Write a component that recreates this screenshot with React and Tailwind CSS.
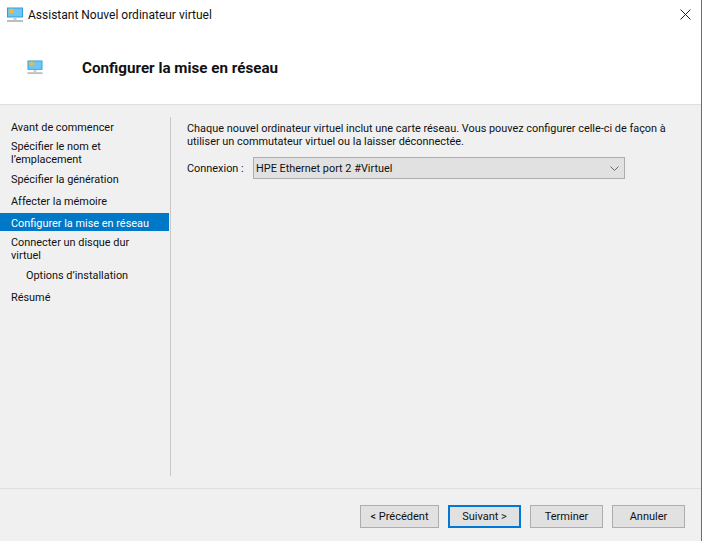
const steps = [
  { label: 'Avant de commencer', cls: 'h-[19px] pt-[3px]' },
  { label: "Spécifier le nom et l’emplacement", cls: 'h-[33px] pt-[3px]' },
  { label: 'Spécifier la génération', cls: 'h-[22px] pt-[3px]' },
  { label: 'Affecter la mémoire', cls: 'h-[21px] pt-[3px]' },
  { label: 'Configurer la mise en réseau', cls: 'h-[18px] pt-[4px] bg-[#0078c8] text-white' },
  { label: 'Connecter un disque dur virtuel', cls: 'h-[35px] pt-[5px]' },
  { label: 'Options d’installation', cls: 'h-[22px] pt-[3px] pl-[26px]' },
  { label: 'Résumé', cls: 'h-[22px] pt-[3px]' },
];

const MonitorIcon = ({ className }) => (
  <svg className={className} viewBox="0 0 16 16">
    <rect x="0" y="0.5" width="16" height="10" fill="#2f9fe0" />
    <rect x="1" y="1.5" width="14" height="8" fill="#6fc6f2" />
    <circle cx="4.5" cy="4" r="2.2" fill="#f6b73c" />
    <path d="M4.5 0.8V7.2M1.3 4H7.7M2.3 1.8L6.7 6.2M6.7 1.8L2.3 6.2" stroke="#f6b73c" strokeWidth="0.6" />
    <rect x="6.5" y="10.5" width="3" height="2.5" fill="#c5ccd2" />
    <rect x="0" y="13" width="16" height="2" fill="#b8c0c7" />
  </svg>
);

const WizardButton = ({ children, primary }) => (
  <button
    className={`w-full h-[23px] flex items-center justify-center bg-[#e1e1e1] text-[#111] text-[11px] ${
      primary ? 'border-2 border-[#0078d7]' : 'border border-[#adadad]'
    }`}
  >
    {children}
  </button>
);

export default function App() {
  return (
    <div
      className="w-[702px] h-[541px] overflow-hidden flex flex-col bg-[#f0f0f0] text-[#111] text-[10.9px] leading-[13px] border-r border-[#6e6e6e]"
      style={{ fontFamily: 'Roboto, "Noto Sans", sans-serif' }}
    >
      <div className="h-[105px] shrink-0 bg-white border-b border-[#dfdfdf] flex flex-col">
        <div className="h-[30px] flex items-center pl-[7px] pr-[10px]">
          <MonitorIcon className="w-[16px] h-[16px] mr-[5px]" />
          <span className="text-[12px]">Assistant Nouvel ordinateur virtuel</span>
          <svg className="ml-auto w-[11px] h-[11px] mb-[1px]" viewBox="0 0 11 11">
            <path d="M0.5 0.5L10.5 10.5M10.5 0.5L0.5 10.5" stroke="#222" strokeWidth="1" fill="none" />
          </svg>
        </div>
        <div className="flex items-center h-[44px] mt-[15px] pl-[27px]">
          <MonitorIcon className="w-[16px] h-[15px]" />
          <h1 className="ml-[39px] text-[15.2px] font-bold mt-[2px]">Configurer la mise en réseau</h1>
        </div>
      </div>

      <div className="flex flex-1 min-h-0">
        <div className="w-[170px] shrink-0 pt-[13px]">
          <div className="w-[169px]">
            {steps.map((s) => (
              <div key={s.label} className={`pl-[11px] pr-[8px] ${s.cls}`}>
                {s.label}
              </div>
            ))}
          </div>
        </div>
        <div className="my-[12px] w-px bg-[#c8c8c8]" />
        <div className="flex-1 pl-[16px] pt-[17px]">
          <p className="w-[490px]">
            Chaque nouvel ordinateur virtuel inclut une carte réseau. Vous pouvez configurer celle-ci de façon à utiliser un commutateur virtuel ou la laisser déconnectée.
          </p>
          <div className="flex items-center mt-[9px]">
            <span className="w-[66px] whitespace-nowrap">Connexion :</span>
            <div className="w-[372px] h-[22px] flex items-center pl-[2px] pr-[5px] bg-[#e1e1e1] border border-[#adadad]">
              <span>HPE Ethernet port 2 #Virtuel</span>
              <svg className="ml-auto w-[9px] h-[5px]" viewBox="0 0 9 5">
                <path d="M0.5 0.5L4.5 4.5L8.5 0.5" stroke="#666" fill="none" />
              </svg>
            </div>
          </div>
        </div>
      </div>

      <div className="h-[53px] shrink-0 border-t border-[#dfdfdf] flex justify-end gap-[9px] pt-[16px] pr-[16px]">
        <div className="w-[79px]"><WizardButton>&lt; Précédent</WizardButton></div>
        <div className="w-[73px]"><WizardButton primary>Suivant &gt;</WizardButton></div>
        <div className="w-[73px]"><WizardButton>Terminer</WizardButton></div>
        <div className="w-[73px]"><WizardButton>Annuler</WizardButton></div>
      </div>
    </div>
  );
}
